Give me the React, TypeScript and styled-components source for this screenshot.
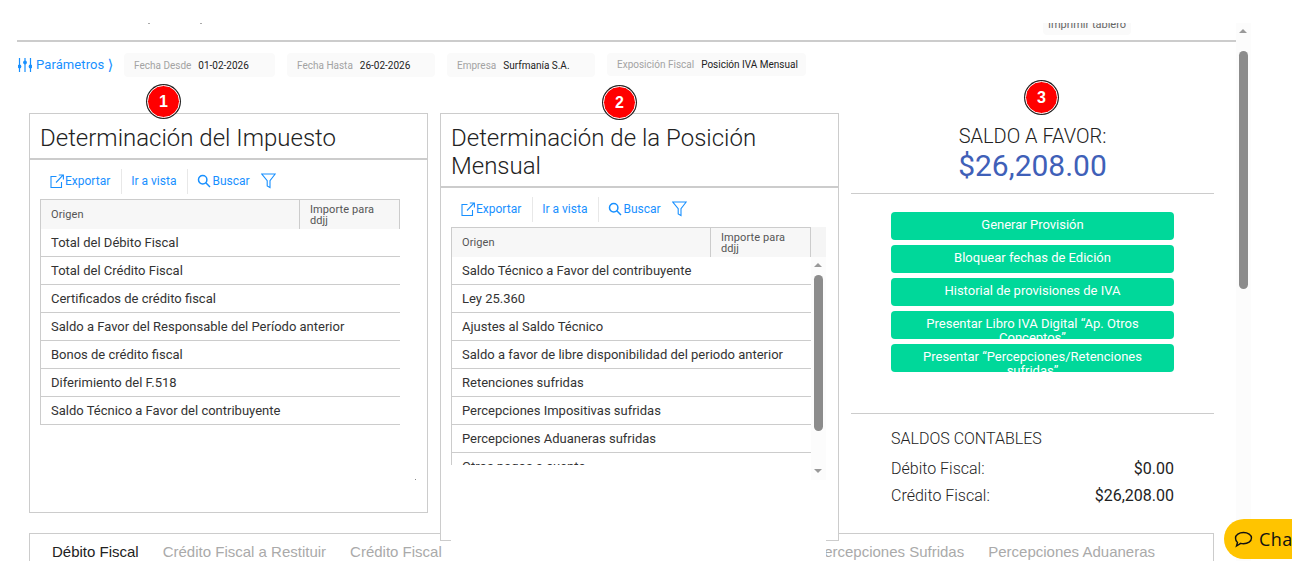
import React from "react";
import styled, { createGlobalStyle } from "styled-components";

const Global = createGlobalStyle`
  html, body { margin: 0; padding: 0; background: #fff; overflow: hidden; }
  body { font-family: Roboto, "Liberation Sans", sans-serif; }
  * { box-sizing: border-box; }
`;

const Page = styled.div`
  position: relative;
  width: 1292px;
  height: 561px;
  overflow: hidden;
  padding-top: 23px;
`;
const Shell = styled.div`
  display: flex;
  width: 1251px;
  height: 538px;
`;
const Content = styled.div`
  width: 1236px;
  height: 100%;
  padding-left: 17px;
`;
const TopBar = styled.div`
  position: relative;
  height: 19px;
  overflow: hidden;
  border-bottom: 2px solid #ccc;
  display: flex;
  justify-content: flex-end;
  padding-right: 105px;
`;
const PrintPill = styled.div`
  width: 88px;
  height: 17px;
  margin-top: -5px;
  background: #fafafa;
  border-radius: 4px;
  font-size: 11px;
  line-height: 14px;
  color: #666;
  text-align: center;
`;
const Speck = styled.i<{ $x: number }>`
  position: absolute;
  top: 0;
  left: ${(p) => p.$x}px;
  width: 2px;
  height: 1px;
  background: #aaa;
`;
const FilterRow = styled.div`
  display: flex;
  align-items: flex-start;
  gap: 12px;
  margin-top: 11px;
  height: 24px;
`;
const Params = styled.div`
  display: flex;
  flex: 0 0 95px;
  min-width: 0;
  align-items: center;
  height: 23px;
  padding-left: 1px;
  font-size: 13px;
  color: #1890ff;
  gap: 4px;
  white-space: nowrap;
  letter-spacing: 0.1px;
  svg {
    flex: none;
  }
`;
const Chevron = styled.span`
  font-size: 15px;
  margin-left: -1px;
  font-family: "DejaVu Sans", sans-serif;
`;
const Pill = styled.div<{ $w: number; $short?: boolean }>`
  width: ${(p) => p.$w}px;
  height: ${(p) => (p.$short ? 23 : 24)}px;
  background: #fafafa;
  border-radius: 4px;
  padding-left: 10px;
  display: flex;
  align-items: center;
  gap: 7px;
  font-size: 10px;
  white-space: nowrap;
`;
const PillLabel = styled.span`
  color: #a3a3a3;
`;
const PillValue = styled.span`
  color: #222;
`;
const Columns = styled.div`
  display: grid;
  grid-template-columns: 399px 399px 363px;
  column-gap: 12px;
  margin-top: 36px;
  padding-left: 12px;
  height: 420px;
  align-items: start;
`;
const Panel = styled.section<{ $h: number; $top?: boolean }>`
  position: relative;
  z-index: ${(p) => (p.$top ? 2 : 1)};
  height: ${(p) => p.$h}px;
  border: 1px solid #ccc;
  background: #fff;
`;
const Badge = styled.div<{ $x: number; $y: number }>`
  position: absolute;
  left: ${(p) => p.$x}px;
  top: ${(p) => p.$y}px;
  z-index: 3;
  width: 33px;
  height: 33px;
  border-radius: 50%;
  background: #f00;
  border: 1px solid #fff;
  box-shadow: 0 0 0 1px #222;
  color: #fff;
  font: bold 16px/31px "Liberation Sans", Arial, sans-serif;
  text-align: center;
`;
const PanelTitle = styled.h2`
  margin: 0;
  padding: 10px 10px 6px;
  font-size: 24px;
  line-height: 28px;
  font-weight: 300;
  color: #222;
  border-bottom: 2px solid #ccc;
`;
const Actions = styled.div`
  display: flex;
  align-items: center;
  height: 39px;
  padding-left: 10.5px;
  padding-top: 3px;
  font-size: 12px;
  color: #1890ff;
`;
const Action = styled.span<{ $sep?: boolean; $wide?: boolean }>`
  display: flex;
  align-items: center;
  height: 25px;
  gap: 1px;
  padding: 0 ${(p) => (p.$wide ? 11.5 : 10.5)}px 0 9.5px;
  white-space: nowrap;
  border-right: ${(p) => (p.$sep ? "1px solid #e8e8e8" : "none")};
`;
const TableWrap = styled.div<{ $w: number; $fill?: boolean }>`
  position: relative;
  margin-left: 10px;
  width: ${(p) => p.$w}px;
  background: #fff;
  height: ${(p) => (p.$fill ? "374px" : "auto")};
`;
const HeadRow = styled.div`
  display: flex;
`;
const Head = styled.div`
  display: grid;
  grid-template-columns: 258px 102px;
  width: 360px;
  height: 30px;
  background: #f7f7f7;
  border: 1px solid #ccc;
  border-width: 1px 1px 0 1px;
  font-size: 11px;
  color: #555;
`;
const HeadCell = styled.div<{ $second?: boolean }>`
  display: flex;
  align-items: center;
  padding: 0 10px;
  line-height: 11px;
  letter-spacing: 0.1px;
  border-left: ${(p) => (p.$second ? "1px solid #ccc" : "none")};
`;
const HeadGutter = styled.div`
  width: 15px;
  height: 30px;
  background: #f5f5f5;
`;
const BodyRow = styled.div`
  display: flex;
  align-items: flex-start;
  background: #fff;
`;
const RowList = styled.div<{ $clip?: boolean }>`
  width: 360px;
  height: ${(p) => (p.$clip ? "208px" : "auto")};
  overflow: hidden;
  border-left: 1px solid #ccc;
`;
const Row = styled.div`
  height: 28px;
  padding-left: 10px;
  font-size: 13px;
  line-height: 27px;
  color: #333;
  border-bottom: 1px solid #ccc;
  white-space: nowrap;
`;
const InnerTrack = styled.div`
  position: relative;
  width: 15px;
  height: 223px;
  background: #fcfcfc;
`;
const Arrow = styled.i<{ $down?: boolean }>`
  position: absolute;
  left: 3px;
  ${(p) => (p.$down ? "bottom: 7px;" : "top: 6px;")}
  width: 0;
  height: 0;
  border-left: 4.5px solid transparent;
  border-right: 4.5px solid transparent;
  ${(p) => (p.$down ? "border-top: 4.5px solid #999;" : "border-bottom: 4.5px solid #999;")}
`;
const InnerThumb = styled.i`
  position: absolute;
  left: 3px;
  top: 18px;
  width: 9px;
  height: 156px;
  border-radius: 5px;
  background: #8c8c8c;
`;
const PanelSpeck = styled.i`
  position: absolute;
  left: 385px;
  top: 365px;
  width: 1px;
  height: 1px;
  background: #888;
`;
const Side = styled.aside`
  position: relative;
  padding-top: 11px;
  height: 400px;
`;
const Summary = styled.div`
  text-align: center;
  height: 70px;
  border-bottom: 1px solid #ccc;
`;
const SummaryLabel = styled.div`
  font-size: 20px;
  line-height: 24px;
  font-weight: 300;
  color: #222;
`;
const SummaryValue = styled.div`
  font-size: 30px;
  line-height: 36px;
  font-weight: 400;
  color: #3f60b8;
`;
const ButtonStack = styled.div`
  display: flex;
  flex-direction: column;
  gap: 5px;
  padding: 18px 40px 41px;
  border-bottom: 1px solid #ccc;
`;
const GreenButton = styled.button`
  display: flex;
  justify-content: center;
  align-items: flex-start;
  width: 283px;
  height: 28px;
  border: none;
  border-radius: 4px;
  background: #00d89a;
  color: #fff;
  font: 400 13px/14px Roboto, sans-serif;
  padding: 6px 30px 0;
  overflow: hidden;
  text-align: center;
`;
const Balances = styled.div`
  padding: 15px 40px 0;
  color: #222;
`;
const BalanceTitle = styled.div`
  font-size: 16px;
  line-height: 20px;
  font-weight: 300;
  margin-bottom: 6px;
`;
const BalanceRow = styled.div`
  display: flex;
  justify-content: space-between;
  font-size: 16px;
  line-height: 27px;
`;
const BalanceName = styled.span`
  font-weight: 300;
`;
const Tabs = styled.div`
  display: flex;
  align-items: flex-start;
  width: 1185px;
  height: 40px;
  margin-left: 12px;
  padding: 9px 58px 0 22px;
  gap: 24px;
  border: 1px solid #ccc;
  border-bottom: none;
  font: 15px/18px "Liberation Sans", Arial, sans-serif;
  white-space: nowrap;
`;
const Tab = styled.span<{ $active?: boolean }>`
  color: ${(p) => (p.$active ? "#222" : "#aaa")};
`;
const TabSpacer = styled.span`
  flex: 1;
`;
const Track = styled.div`
  position: relative;
  width: 15px;
  height: 100%;
  background: #fcfcfc;
`;
const Thumb = styled.i`
  position: absolute;
  left: 3px;
  top: 28px;
  width: 9px;
  height: 238px;
  border-radius: 5px;
  background: #8c8c8c;
`;
const Chat = styled.div`
  position: absolute;
  left: 1224px;
  top: 519px;
  width: 90px;
  height: 40px;
  padding-left: 10px;
  display: flex;
  align-items: center;
  gap: 6px;
  border-radius: 20px;
  background: #ffc400;
  color: #111;
  font: 500 18px "Open Sans", sans-serif;
  letter-spacing: 0.4px;
`;

const ParamsIcon = () => (
  <svg width="14" height="14" viewBox="0 0 14 14" fill="none" stroke="#1890ff" strokeWidth="1.2">
    <path d="M1.500 0v14M7 0v14M12.500 0v14" />
    <circle cx="1.500" cy="8.500" r="1.300" fill="#1890ff" />
    <circle cx="7" cy="4.500" r="1.300" fill="#1890ff" />
    <circle cx="12.500" cy="8.500" r="1.300" fill="#1890ff" />
  </svg>
);
const ExportIcon = () => (
  <svg width="14" height="14" viewBox="0 0 14 14" fill="none" stroke="#1890ff" strokeWidth="1.1">
    <path d="M6.500 2.500H1v11h10.500V8" />
    <path d="M6 8.500 13 1.200M8.800 1h4.600v4.600" />
  </svg>
);
const SearchIcon = () => (
  <svg width="14" height="14" viewBox="0 0 14 14" fill="none" stroke="#1890ff" strokeWidth="1.5">
    <circle cx="5.700" cy="5.700" r="4.200" />
    <path d="M8.800 8.800 13 13" />
  </svg>
);
const FunnelIcon = () => (
  <svg width="15" height="16" viewBox="0 0 15 16" fill="none" stroke="#1890ff" strokeWidth="1.1">
    <path d="M.8 1h13.400L9 7.600v6.900l-2.800-1.600V7.600z" />
  </svg>
);
const ChatIcon = () => (
  <svg width="19" height="17" viewBox="0 0 19 17" fill="none" stroke="#111" strokeWidth="1.4">
    <path d="M9.500 1.500c4.400 0 8 2.400 8 5.600s-3.600 5.600-8 5.600c-1 0-1.900-.1-2.800-.4L2.500 15l1-3.500C2 10.400 1.500 8.800 1.500 7.100c0-3.200 3.600-5.600 8-5.600z" />
  </svg>
);

const toolbar = (
  <Actions>
    <Action $sep>
      <ExportIcon />
      Exportar
    </Action>
    <Action $sep>Ir a vista</Action>
    <Action $wide>
      <SearchIcon />
      Buscar
    </Action>
    <FunnelIcon />
  </Actions>
);

const tableHead = (
  <Head>
    <HeadCell>Origen</HeadCell>
    <HeadCell $second>Importe para ddjj</HeadCell>
  </Head>
);

const rowsOne = [
  "Total del Débito Fiscal",
  "Total del Crédito Fiscal",
  "Certificados de crédito fiscal",
  "Saldo a Favor del Responsable del Período anterior",
  "Bonos de crédito fiscal",
  "Diferimiento del F.518",
  "Saldo Técnico a Favor del contribuyente",
];
const rowsTwo = [
  "Saldo Técnico a Favor del contribuyente",
  "Ley 25.360",
  "Ajustes al Saldo Técnico",
  "Saldo a favor de libre disponibilidad del periodo anterior",
  "Retenciones sufridas",
  "Percepciones Impositivas sufridas",
  "Percepciones Aduaneras sufridas",
  "Otros pagos a cuenta",
];
const buttons = [
  "Generar Provisión",
  "Bloquear fechas de Edición",
  "Historial de provisiones de IVA",
  "Presentar Libro IVA Digital “Ap. Otros Conceptos”",
  "Presentar “Percepciones/Retenciones sufridas”",
];

export default function App() {
  return (
    <Page>
      <Global />
      <Shell>
        <Content>
          <TopBar>
            <Speck $x={131} />
            <Speck $x={183} />
            <PrintPill>Imprimir tablero</PrintPill>
          </TopBar>
          <FilterRow>
            <Params>
              <ParamsIcon />
              Parámetros
              <Chevron>⟩</Chevron>
            </Params>
            <Pill $w={151}>
              <PillLabel>Fecha Desde</PillLabel>
              <PillValue>01-02-2026</PillValue>
            </Pill>
            <Pill $w={148}>
              <PillLabel>Fecha Hasta</PillLabel>
              <PillValue>26-02-2026</PillValue>
            </Pill>
            <Pill $w={148}>
              <PillLabel>Empresa</PillLabel>
              <PillValue>Surfmanía S.A.</PillValue>
            </Pill>
            <Pill $w={199} $short>
              <PillLabel>Exposición Fiscal</PillLabel>
              <PillValue>Posición IVA Mensual</PillValue>
            </Pill>
          </FilterRow>
          <Columns>
            <Panel $h={400}>
              <Badge $x={117} $y={-29}>1</Badge>
              <PanelTitle>Determinación del Impuesto</PanelTitle>
              {toolbar}
              <TableWrap $w={360}>
                {tableHead}
                <RowList>
                  {rowsOne.map((r) => (
                    <Row key={r}>{r}</Row>
                  ))}
                </RowList>
              </TableWrap>
              <PanelSpeck />
            </Panel>
            <Panel $h={428} $top>
              <Badge $x={162} $y={-28}>2</Badge>
              <PanelTitle>Determinación de la Posición Mensual</PanelTitle>
              {toolbar}
              <TableWrap $w={375} $fill>
                <HeadRow>
                  {tableHead}
                  <HeadGutter />
                </HeadRow>
                <BodyRow>
                  <RowList $clip>
                    {rowsTwo.map((r) => (
                      <Row key={r}>{r}</Row>
                    ))}
                  </RowList>
                  <InnerTrack>
                    <Arrow />
                    <InnerThumb />
                    <Arrow $down />
                  </InnerTrack>
                </BodyRow>
              </TableWrap>
            </Panel>
            <Side>
              <Badge $x={174} $y={-32}>3</Badge>
              <Summary>
                <SummaryLabel>SALDO A FAVOR:</SummaryLabel>
                <SummaryValue>$26,208.00</SummaryValue>
              </Summary>
              <ButtonStack>
                {buttons.map((b) => (
                  <GreenButton key={b}>{b}</GreenButton>
                ))}
              </ButtonStack>
              <Balances>
                <BalanceTitle>SALDOS CONTABLES</BalanceTitle>
                <BalanceRow>
                  <BalanceName>Débito Fiscal:</BalanceName>
                  <span>$0.00</span>
                </BalanceRow>
                <BalanceRow>
                  <BalanceName>Crédito Fiscal:</BalanceName>
                  <span>$26,208.00</span>
                </BalanceRow>
              </Balances>
            </Side>
          </Columns>
          <Tabs>
            <Tab $active>Débito Fiscal</Tab>
            <Tab>Crédito Fiscal a Restituir</Tab>
            <Tab>Crédito Fiscal</Tab>
            <TabSpacer />
            <Tab>Percepciones Sufridas</Tab>
            <Tab>Percepciones Aduaneras</Tab>
          </Tabs>
        </Content>
        <Track>
          <Arrow />
          <Thumb />
        </Track>
      </Shell>
      <Chat>
        <ChatIcon />
        Chat
      </Chat>
    </Page>
  );
}
